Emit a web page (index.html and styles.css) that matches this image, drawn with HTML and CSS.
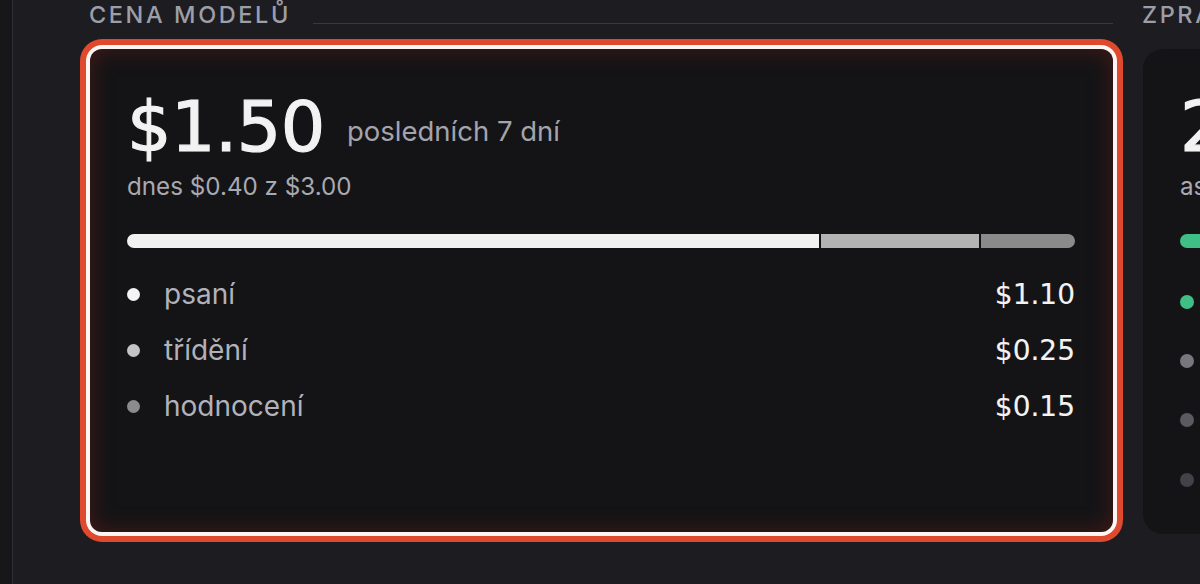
FILE: index.html
```html
<!DOCTYPE html>
<html lang="cs">
<head>
<meta charset="utf-8">
<title>Cena modelů</title>
<link rel="stylesheet" href="styles.css">
</head>
<body>
<aside class="sidebar"></aside>
<main class="main">
  <section class="col col-main">
    <h2 class="section-title"><span>CENA MODELŮ</span><i class="rule"></i></h2>
    <div class="card card-focus">
      <div class="total">
        <span class="total-amount">$1.50</span>
        <span class="total-period">posledních 7 dní</span>
      </div>
      <div class="total-sub">dnes $0.40 z $3.00</div>
      <div class="bar">
        <span class="seg seg-1" style="flex-grow:110"></span>
        <span class="seg seg-2" style="flex-grow:25"></span>
        <span class="seg seg-3" style="flex-grow:15"></span>
      </div>
      <ul class="legend">
        <li class="legend-row"><span class="dot dot-1"></span><span class="legend-label">psaní</span><span class="legend-value">$1.10</span></li>
        <li class="legend-row"><span class="dot dot-2"></span><span class="legend-label">třídění</span><span class="legend-value">$0.25</span></li>
        <li class="legend-row"><span class="dot dot-3"></span><span class="legend-label">hodnocení</span><span class="legend-value">$0.15</span></li>
      </ul>
    </div>
  </section>
  <section class="col col-side">
    <h2 class="section-title"><span>ZPRA</span><i class="rule"></i></h2>
    <div class="card card-side">
      <div class="total">
        <span class="total-amount side-amount">2</span>
      </div>
      <div class="total-sub side-sub">as</div>
      <div class="bar bar-green"><span class="seg seg-green" style="flex-grow:1"></span></div>
      <ul class="legend side-legend">
        <li class="legend-row side-row"><span class="dot dot-g"></span></li>
        <li class="legend-row side-row"><span class="dot dot-s1"></span></li>
        <li class="legend-row side-row"><span class="dot dot-s2"></span></li>
        <li class="legend-row side-row"><span class="dot dot-s3"></span></li>
      </ul>
    </div>
  </section>
</main>
</body>
</html>
```

FILE: styles.css
```css
* { box-sizing: border-box; }
html, body { margin: 0; padding: 0; }
body {
  width: 1200px;
  height: 584px;
  overflow: hidden;
  display: flex;
  background: #1d1d21;
  font-family: Inter, "Noto Sans", sans-serif;
  color: #e8e8ea;
}
.sidebar {
  flex: 0 0 13px;
  background: #17171a;
  border-right: 1px solid #2f2f35;
}
.main {
  display: flex;
  gap: 30px;
  padding-left: 77px;
  flex: 0 0 auto;
}
.col { display: flex; flex-direction: column; }
.col-main { width: 1023px; }
.col-side { width: 57px; }
.section-title {
  margin: 0 0 0 -1px;
  height: 30px;
  display: flex;
  align-items: center;
  gap: 22px;
  font-size: 23.5px;
  font-weight: 500;
  letter-spacing: 2.6px;
  color: #9c9ea8;
  line-height: 30px;
  white-space: nowrap;
}
.rule {
  flex: 1;
  height: 1px;
  background: #38383e;
  margin-top: 16px;
}
.card {
  margin-top: 19px;
  height: 483px;
  border-radius: 12px;
  background: #141416;
  padding: 36px 38px 0 37px;
}
.card-focus {
  box-shadow: 0 0 0 4px #fbf6f3, 0 0 0 10px #df4a2e, inset 0 0 22px rgba(120, 32, 24, 0.5);
}
.card-side {
  border-radius: 20px 0 0 20px;
  background: #141417;
  height: 485px;
  padding-right: 0;
  overflow: hidden;
}
.total { display: flex; align-items: center; gap: 22px; }
.total-amount {
  font-family: "DejaVu Sans", sans-serif;
  font-size: 70px;
  letter-spacing: -0.5px;
  color: #f2f2f2;
  -webkit-text-stroke: 1.2px #f2f2f2;
  line-height: 84px;
}
.total-period {
  font-size: 27.5px;
  color: #a3a4ad;
  margin-top: 8px;
}
.total-sub {
  font-size: 24.2px;
  color: #a8a9b1;
  margin-top: 3px;
  white-space: nowrap;
}
.bar {
  margin-top: 33px;
  height: 14px;
  display: flex;
  gap: 2px;
  border-radius: 7px;
  overflow: hidden;
}
.bar-green { border-radius: 7px 0 0 7px; }
.seg { display: block; flex-basis: 0; }
.seg-1 { background: #f1f1f1; }
.seg-2 { background: #b3b3b3; }
.seg-3 { background: #8a8a8a; }
.seg-green { background: #3fbf86; }
.legend { list-style: none; margin: 18px 0 0; padding: 0; }
.legend-row {
  display: flex;
  align-items: center;
  height: 56px;
}
.dot {
  width: 13px;
  height: 13px;
  border-radius: 50%;
  flex: 0 0 13px;
  margin-right: 24px;
}
.dot-1 { background: #f4f4f4; }
.dot-2 { background: #c4c4c4; }
.dot-3 { background: #8c8c8c; }
.dot-g { background: #3fbf86; }
.dot-s1 { background: #77777d; }
.dot-s2 { background: #5a5a60; }
.dot-s3 { background: #424248; }
.side-row .dot { width: 14px; height: 14px; flex-basis: 14px; }
.legend-label {
  font-size: 28px;
  color: #b1b2ba;
  flex: 1;
}
.legend-value {
  font-family: "DejaVu Sans", sans-serif;
  font-size: 28px;
  color: #f3f3f3;
  -webkit-text-stroke: 0.1px #f3f3f3;
}
.side-legend { margin-top: 24px; }
.side-row { height: 59.3px; }
```
